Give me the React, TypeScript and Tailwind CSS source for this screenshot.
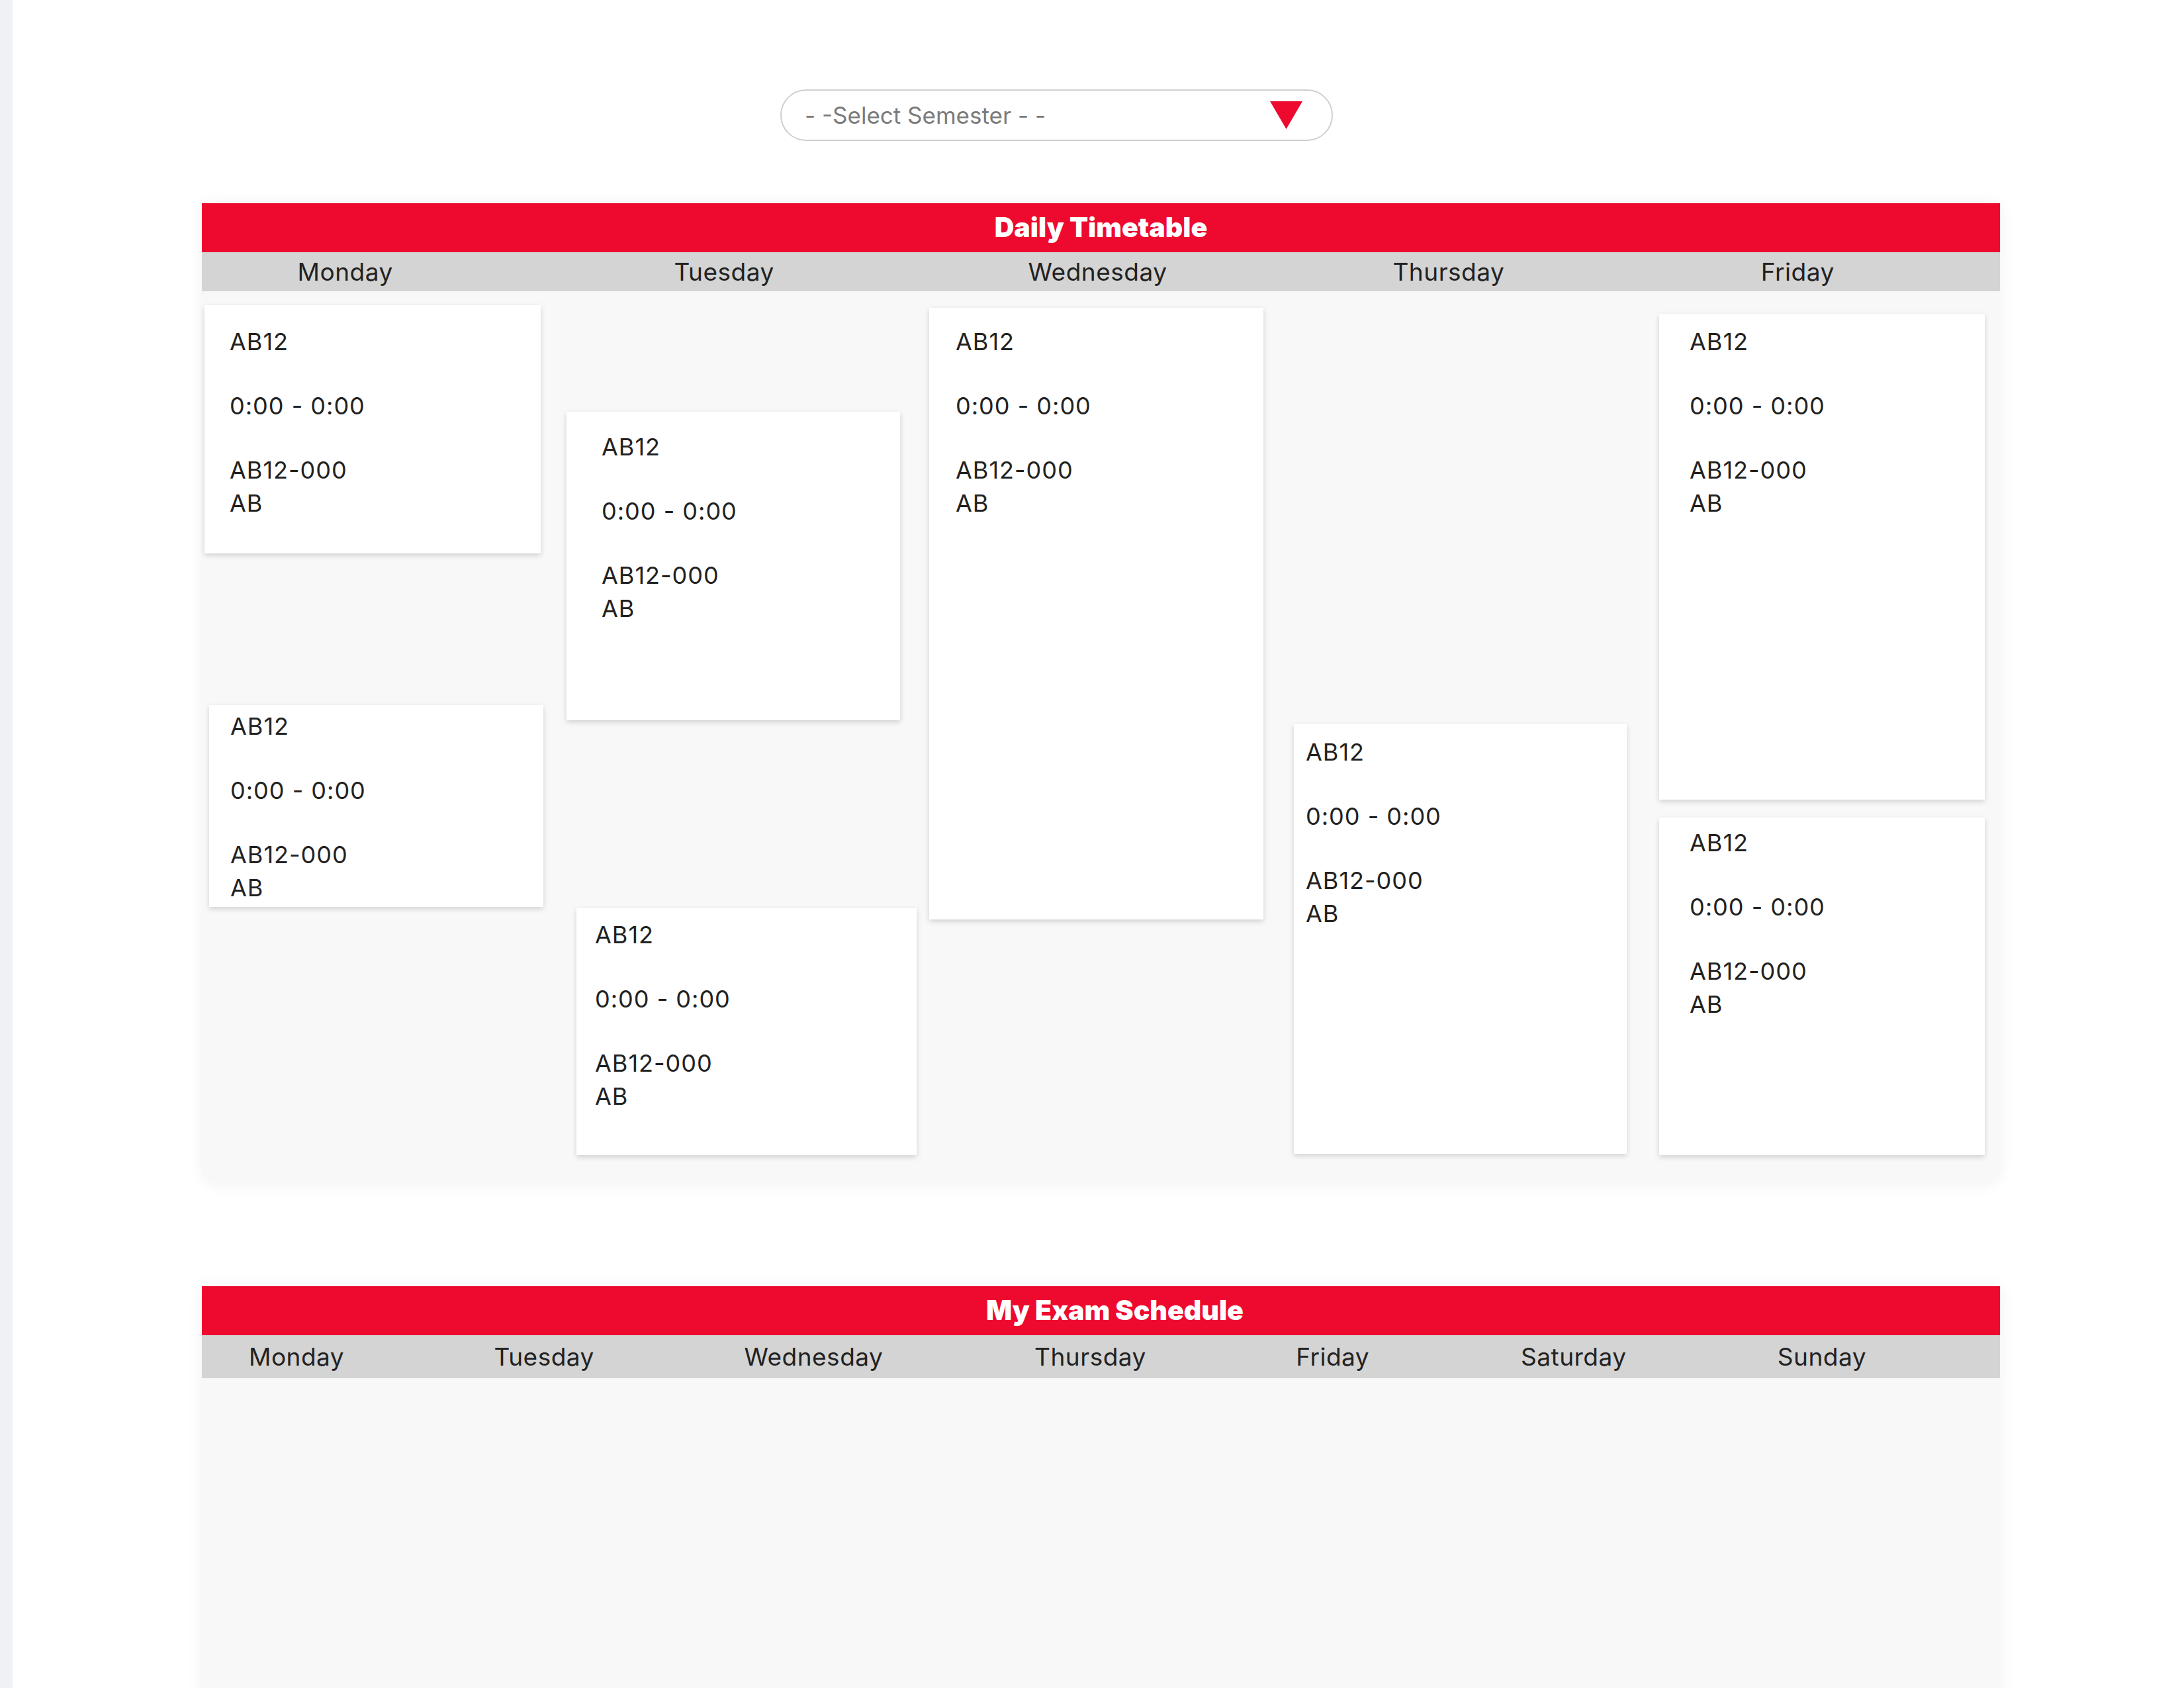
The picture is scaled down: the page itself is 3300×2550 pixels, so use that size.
import React from 'react';

type Slot = {
  id: string;
  box: string;
  pad: string;
};

const columns: { width: string; slots: Slot[] }[] = [
  {
    width: 'w-[540px]',
    slots: [
      { id: 'mon-1', box: 'ml-[4px] mt-[21px] w-[508px] h-[375px]', pad: 'pt-[30px] pl-[38px]' },
      { id: 'mon-2', box: 'ml-[11px] mt-[229px] w-[505px] h-[305px]', pad: 'pt-[7px] pl-[32px]' },
    ],
  },
  {
    width: 'w-[550px]',
    slots: [
      { id: 'tue-1', box: 'ml-[11px] mt-[182px] w-[504px] h-[466px]', pad: 'pt-[28px] pl-[53px]' },
      { id: 'tue-2', box: 'ml-[26px] mt-[284px] w-[514px] h-[373px]', pad: 'pt-[15px] pl-[28px]' },
    ],
  },
  {
    width: 'w-[550px]',
    slots: [{ id: 'wed-1', box: 'ml-[9px] mt-[25px] w-[505px] h-[924px]', pad: 'pt-[26px] pl-[40px]' }],
  },
  {
    width: 'w-[550px]',
    slots: [{ id: 'thu-1', box: 'ml-[10px] mt-[654px] w-[503px] h-[649px]', pad: 'pt-[17px] pl-[18px]' }],
  },
  {
    width: 'w-[527px]',
    slots: [
      { id: 'fri-1', box: 'ml-[12px] mt-[34px] w-[492px] h-[734px]', pad: 'pt-[17px] pl-[46px]' },
      { id: 'fri-2', box: 'ml-[12px] mt-[27px] w-[492px] h-[510px]', pad: 'pt-[13px] pl-[46px]' },
    ],
  },
];

// label centres in the reference are not evenly spread, so each one is nudged left
const weekDays = [
  { label: 'Monday', shift: 'pr-[110px]' },
  { label: 'Tuesday', shift: 'pr-[52px]' },
  { label: 'Wednesday', shift: 'pr-[10px]' },
  { label: 'Thursday', shift: 'pr-[36px]' },
  { label: 'Friday', shift: 'pr-[68px]' },
];

const examDays = [
  { label: 'Monday', shift: 'pr-[102px]' },
  { label: 'Tuesday', shift: 'pr-[130px]' },
  { label: 'Wednesday', shift: 'pr-[92px]' },
  { label: 'Thursday', shift: 'pr-[32px]' },
  { label: 'Friday', shift: 'pr-[76px]' },
  { label: 'Saturday', shift: 'pr-[124px]' },
  { label: 'Sunday', shift: 'pr-[150px]' },
];

function ClassCard({ slot }: { slot: Slot }) {
  return (
    <div className={`bg-white shadow-[0_3px_8px_rgba(0,0,0,0.16)] ${slot.box} ${slot.pad}`}>
      <div className="flex flex-col gap-[47px] text-[36px] leading-[50px] tracking-[1px] text-[#222]">
        <p>AB12</p>
        <p>0:00 - 0:00</p>
        <p>
          AB12-000
          <br />
          AB
        </p>
      </div>
    </div>
  );
}

export default function App() {
  return (
    <div className="flex h-[2550px] overflow-hidden bg-white font-['Inter','Liberation_Sans',sans-serif]">
      <div className="w-[19px] shrink-0 bg-[#eff1f5]" />

      <main className="flex-1 pl-[286px] pt-[135px]">
        {/* Semester select */}
        <div className="pl-[874px]">
          <div className="flex h-[78px] w-[835px] items-center justify-between rounded-full border-2 border-[#cfcfcf] pl-[35px] pr-[44px]">
            <span className="text-[35px] text-[#7b7b7b]">- -Select Semester - -</span>
            <svg width="49" height="42" viewBox="0 0 49 42">
              <polygon points="0,0 49,0 24.5,42" fill="#ee0a2f" />
            </svg>
          </div>
        </div>

        {/* Daily Timetable */}
        <section className="mt-[94px] w-[2717px] rounded-b-[24px] shadow-[0_0_24px_rgba(0,0,0,0.06)]">
          <div className="flex h-[74px] items-center justify-center bg-[#ee0a2f]">
            <h2 className="text-[41px] font-black text-white">Daily Timetable</h2>
          </div>
          <div className="grid h-[59px] grid-cols-5 items-center bg-[#d4d4d4]">
            {weekDays.map((d) => (
              <div key={d.label} className={`flex justify-center text-[37px] tracking-[0.5px] text-[#222] ${d.shift}`}>
                {d.label}
              </div>
            ))}
          </div>
          <div className="flex h-[1349px] rounded-b-[24px] bg-[#f8f8f8]">
            {columns.map((col, i) => (
              <div key={i} className={`flex flex-col ${col.width}`}>
                {col.slots.map((s) => (
                  <ClassCard key={s.id} slot={s} />
                ))}
              </div>
            ))}
          </div>
        </section>

        {/* My Exam Schedule */}
        <section className="mt-[154px] w-[2717px] shadow-[0_0_24px_rgba(0,0,0,0.06)]">
          <div className="flex h-[74px] items-center justify-center bg-[#ee0a2f] pl-[42px]">
            <h2 className="text-[41px] font-black text-white">My Exam Schedule</h2>
          </div>
          <div className="grid h-[65px] grid-cols-7 items-center bg-[#d4d4d4]">
            {examDays.map((d) => (
              <div key={d.label} className={`flex justify-center text-[37px] tracking-[0.5px] text-[#222] ${d.shift}`}>
                {d.label}
              </div>
            ))}
          </div>
          <div className="h-[600px] bg-[#f8f8f8]" />
        </section>
      </main>
    </div>
  );
}
